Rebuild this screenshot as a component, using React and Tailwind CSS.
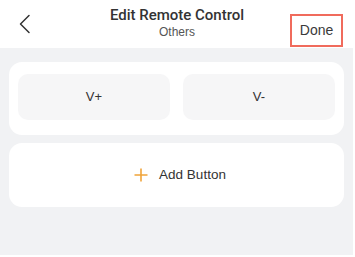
import React from "react";

const font = { fontFamily: "'Liberation Sans', Arial, sans-serif" };

const App = () => {
  const keys = ["V+", "V-"];

  return (
    <div
      className="w-[354px] h-[256px] bg-white flex flex-col"
      style={font}
    >
      {/* Header */}
      <div className="h-12 shrink-0 grid grid-cols-[64px_1fr_64px] items-center">
        <button className="ml-[16px] w-[18px] h-[22px] flex items-center justify-center">
          <svg width="14" height="20" viewBox="0 0 14 20" fill="none">
            <path
              d="M11 1.5 L2.5 10 L11 18.5"
              stroke="#333"
              strokeWidth="1.5"
              strokeLinecap="round"
              strokeLinejoin="round"
            />
          </svg>
        </button>

        <div className="flex flex-col items-center -mt-[2px]">
          <h1
            className="text-[15px] leading-[18px] font-medium text-[#333]"
            style={{ fontFamily: "Roboto, 'Liberation Sans', sans-serif" }}
          >
            Edit Remote Control
          </h1>
          <p className="text-[12px] leading-[16px] text-[#555]">Others</p>
        </div>

        <button className="justify-self-end mr-[11px] w-[53px] h-[33px] mt-[12px] border-2 border-[#f06b5c] text-[14px] text-[#3a3a3a] flex items-center justify-center">
          Done
        </button>
      </div>

      {/* Content */}
      <div className="flex-1 bg-[#f1f2f4] px-[9px] pt-[14px] mr-[1px] mb-[1px]">
        <div className="bg-white rounded-[13px] flex gap-[13px] px-[9px] pt-[12px] pb-[15px]">
          {keys.map((key) => (
            <div
              key={key}
              className="flex-1 h-[46px] rounded-[10px] bg-[#f6f6f7] flex items-center justify-center text-[13px] text-[#333]"
            >
              {key}
            </div>
          ))}
        </div>

        <div className="mt-[8px] h-[64px] bg-white rounded-[13px] flex items-center justify-center gap-[11px] pl-[7px]">
          <svg width="14" height="14" viewBox="0 0 14 14">
            <path
              d="M7 0.5 V13.5 M0.5 7 H13.5"
              stroke="#f0a43a"
              strokeWidth="1.6"
            />
          </svg>
          <span className="text-[13.5px] text-[#333]">Add Button</span>
        </div>
      </div>
    </div>
  );
};

export default App;
